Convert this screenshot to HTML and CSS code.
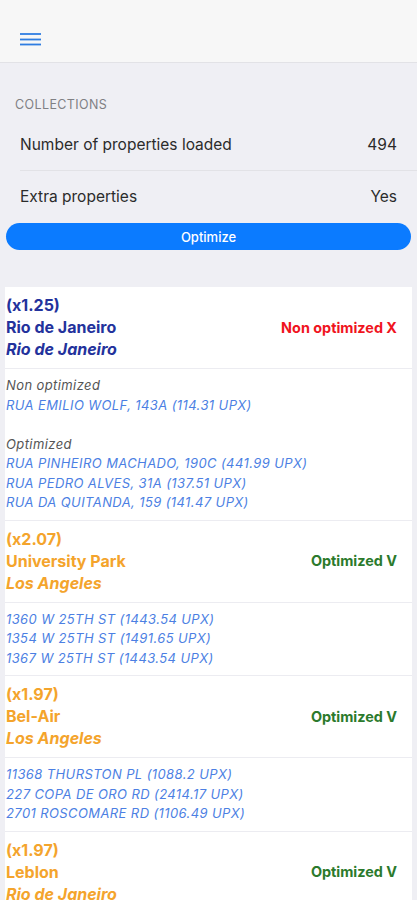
FILE: index.html
```html
<!DOCTYPE html>
<html>
<head>
<meta charset="utf-8">
<link rel="stylesheet" href="styles.css">
</head>
<body>
<header class="topbar">
  <svg class="menu" width="21" height="13" viewBox="0 0 21 13"><g stroke="#2f7de1" stroke-width="1.8"><line x1="0" y1="1" x2="21" y2="1"/><line x1="0" y1="6.5" x2="21" y2="6.5"/><line x1="0" y1="11.5" x2="21" y2="11.5"/></g></svg>
</header>
<main>
  <div class="section-title">COLLECTIONS</div>
  <div class="rows">
    <div class="row"><span>Number of properties loaded</span><span>494</span></div>
    <div class="row"><span>Extra properties</span><span>Yes</span></div>
  </div>
  <button class="optimize">Optimize</button>

  <div class="list">
    <div class="card navy">
      <div class="card-head">
        <div class="titles">
          <div>(x1.25)</div>
          <div>Rio de Janeiro</div>
          <div class="it">Rio de Janeiro</div>
        </div>
        <div class="status bad">Non optimized X</div>
      </div>
      <div class="card-body">
        <div class="label">Non optimized</div>
        <div class="addr">RUA EMILIO WOLF, 143A (114.31 UPX)</div>
        <div class="blank"></div>
        <div class="label">Optimized</div>
        <div class="addr">RUA PINHEIRO MACHADO, 190C (441.99 UPX)</div>
        <div class="addr">RUA PEDRO ALVES, 31A (137.51 UPX)</div>
        <div class="addr">RUA DA QUITANDA, 159 (141.47 UPX)</div>
      </div>
    </div>

    <div class="card orange">
      <div class="card-head">
        <div class="titles">
          <div>(x2.07)</div>
          <div>University Park</div>
          <div class="it">Los Angeles</div>
        </div>
        <div class="status good">Optimized V</div>
      </div>
      <div class="card-body">
        <div class="addr">1360 W 25TH ST (1443.54 UPX)</div>
        <div class="addr">1354 W 25TH ST (1491.65 UPX)</div>
        <div class="addr">1367 W 25TH ST (1443.54 UPX)</div>
      </div>
    </div>

    <div class="card orange">
      <div class="card-head">
        <div class="titles">
          <div>(x1.97)</div>
          <div>Bel-Air</div>
          <div class="it">Los Angeles</div>
        </div>
        <div class="status good">Optimized V</div>
      </div>
      <div class="card-body">
        <div class="addr">11368 THURSTON PL (1088.2 UPX)</div>
        <div class="addr">227 COPA DE ORO RD (2414.17 UPX)</div>
        <div class="addr">2701 ROSCOMARE RD (1106.49 UPX)</div>
      </div>
    </div>

    <div class="card orange">
      <div class="card-head">
        <div class="titles">
          <div>(x1.97)</div>
          <div>Leblon</div>
          <div class="it">Rio de Janeiro</div>
        </div>
        <div class="status good">Optimized V</div>
      </div>
    </div>
  </div>
</main>
</body>
</html>
```

FILE: styles.css
```css
* { box-sizing: border-box; }
html, body { margin: 0; padding: 0; }
body {
  background: #efeff4;
  font-family: Inter, "Noto Sans", sans-serif;
  width: 417px;
  overflow: hidden;
  height: 900px;
}
.topbar {
  height: 63px;
  background: #f7f7f7;
  border-bottom: 1px solid #e2e2e6;
  display: flex;
  align-items: flex-start;
  padding: 33px 0 0 20px;
}
.menu { display: block; }
main { display: flex; flex-direction: column; }
.section-title {
  font-size: 12.5px;
  color: #808084;
  padding: 34px 0 0 15px;
  line-height: 16px;
  letter-spacing: 0.4px;
}
.rows { margin-top: 6px; }
.row {
  margin-left: 20px;
  padding-right: 20px;
  height: 51px;
  display: flex;
  justify-content: space-between;
  align-items: center;
  font-size: 15.5px;
  color: #2b2b2b;
}
.row + .row { border-top: 1px solid #e2e2e6; }
.optimize {
  margin: 2px 6px 0 6px;
  height: 27px;
  border: none;
  border-radius: 14px;
  background: #0b7bff;
  color: #fff;
  font-family: Inter, sans-serif;
  font-size: 13px;
  font-weight: 500;
  padding: 0;
}
.list {
  margin: 37px 5px 0 5px;
  background: #fff;
}
.card { border-bottom: 1px solid #ececf1; }
.card-head {
  display: flex;
  justify-content: space-between;
  align-items: center;
  padding: 7px 15px 8px 1px;
  border-bottom: 1px solid #ececf1;
}
.titles {
  font-size: 16px;
  font-weight: 700;
  line-height: 22px;
}
.titles .it { font-style: italic; }
.navy .titles { color: #23329c; }
.orange .titles { color: #f4a42c; }
.status { font-size: 14.4px; font-weight: 700; }
.status.bad { color: #f0141e; }
.status.good { color: #2b7a2c; }
.card-body {
  padding: 7px 1px 7px 1px;
  font-size: 13px;
  letter-spacing: 0.4px;
  line-height: 19.5px;
  font-style: italic;
}
.label { color: #555; }
.addr { color: #4c7fe3; }
.blank { height: 19.5px; }
```
